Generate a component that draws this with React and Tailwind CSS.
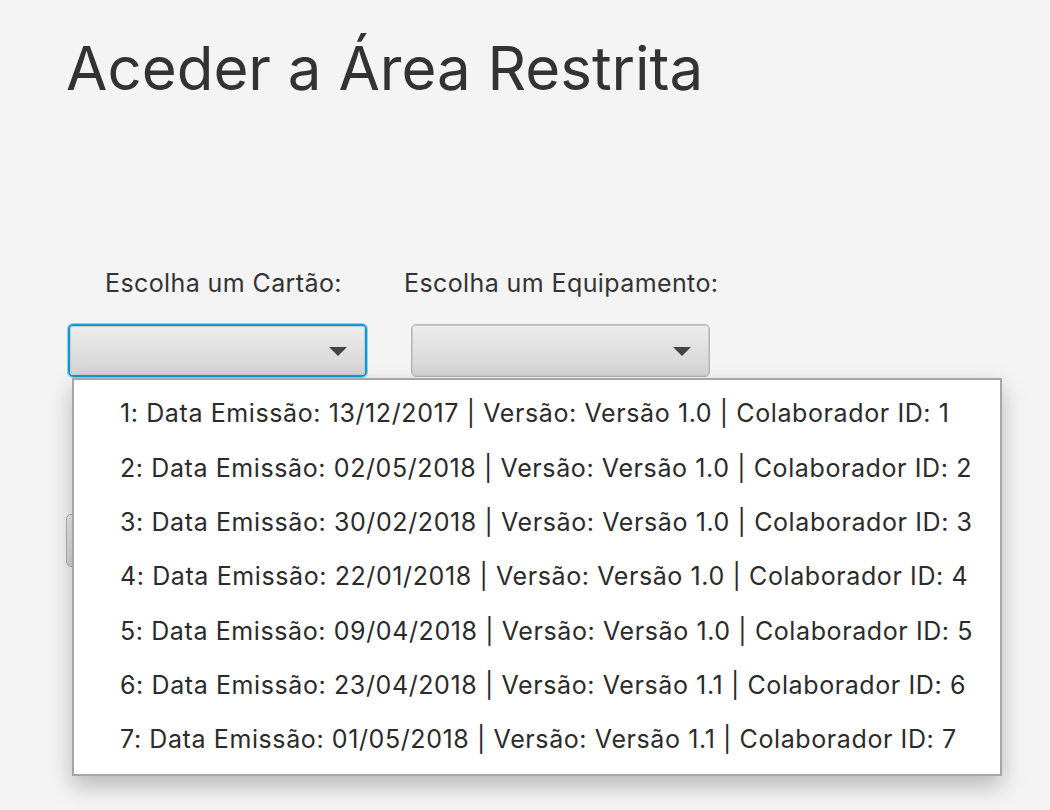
const items = [
  "1: Data Emissão: 13/12/2017 | Versão: Versão 1.0 | Colaborador ID: 1",
  "2: Data Emissão: 02/05/2018 | Versão: Versão 1.0 | Colaborador ID: 2",
  "3: Data Emissão: 30/02/2018 | Versão: Versão 1.0 | Colaborador ID: 3",
  "4: Data Emissão: 22/01/2018 | Versão: Versão 1.0 | Colaborador ID: 4",
  "5: Data Emissão: 09/04/2018 | Versão: Versão 1.0 | Colaborador ID: 5",
  "6: Data Emissão: 23/04/2018 | Versão: Versão 1.1 | Colaborador ID: 6",
  "7: Data Emissão: 01/05/2018 | Versão: Versão 1.1 | Colaborador ID: 7",
];

function Arrow() {
  return (
    <svg width="20" height="10" viewBox="0 0 20 10">
      <polygon points="1,1 19,1 10,10" fill="#444" />
    </svg>
  );
}

function Combo({ focused }) {
  return (
    <div
      className={
        "w-[299px] h-[53px] rounded-[5px] " +
        (focused
          ? "border-2 border-[#0f9ad6] shadow-[0_0_0_1px_#8fd0ee]"
          : "border border-[#b4b4b4]")
      }
    >
      <div className="w-full h-full rounded-[3px] bg-gradient-to-b from-[#ececec] to-[#d4d4d4] flex items-center justify-end pr-[16px] border border-[#cacaca]">
        <Arrow />
      </div>
    </div>
  );
}

export default function App() {
  return (
    <div className="w-[1050px] h-[810px] bg-[#f4f4f4] overflow-hidden relative font-['Inter',sans-serif] text-[#333]">
      <h1 className="pl-[66px] pt-[33px] text-[60px] leading-[70px] text-[#333]">
        Aceder a Área Restrita
      </h1>

      <div className="flex gap-[44px] pl-[68px] mt-[165px]">
        <div className="flex flex-col">
          <span className="pl-[37px] text-[25px] leading-[30px] tracking-[0.4px] text-[#333]">Escolha um Cartão:</span>
          <div className="mt-[26px]">
            <Combo focused />
          </div>
        </div>
        <div className="flex flex-col">
          <span className="-ml-[7px] text-[25px] leading-[30px] tracking-[0.4px] text-[#333]">Escolha um Equipamento:</span>
          <div className="mt-[26px]">
            <Combo />
          </div>
        </div>
      </div>

      <div className="ml-[66px] mt-[137px] w-[300px] h-[53px] rounded-[5px] border border-[#b0b0b0] bg-gradient-to-b from-[#ececec] to-[#d6d6d6]" />

      <div className="absolute left-[72px] top-[378px] w-[930px] h-[398px] bg-white border-2 border-[#a6a6a6] shadow-[0_10px_22px_rgba(0,0,0,0.25)] pt-[7px]">
        {items.map((t) => (
          <div key={t} className="h-[54.3px] flex items-center pl-[46px] text-[25px] tracking-[0.6px] text-[#2b2b2b] whitespace-nowrap">
            {t}
          </div>
        ))}
      </div>
    </div>
  );
}
